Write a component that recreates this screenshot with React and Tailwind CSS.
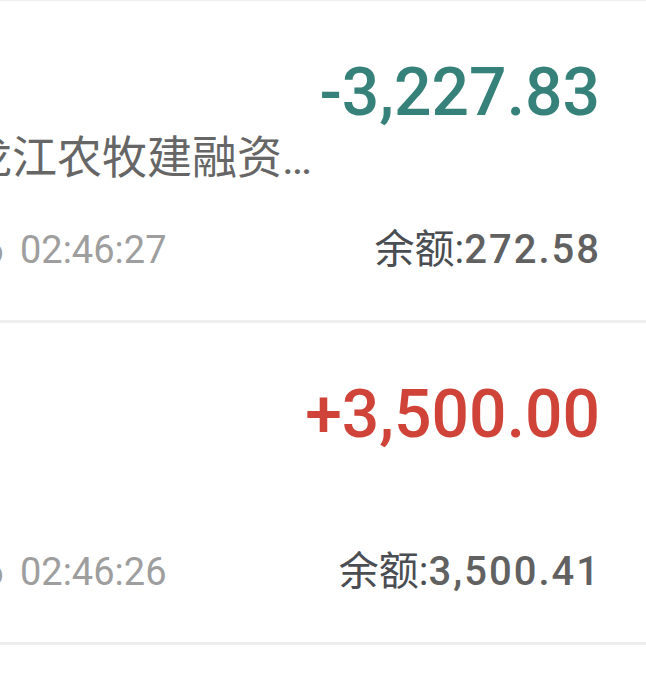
import React from 'react';

const rows = [
  {
    amount: '-3,227.83',
    positive: false,
    desc: '黑龙江农牧建融资产管理有限公司',
    date: '03-16',
    time: '02:46:27',
    balance: '272.58',
  },
  {
    amount: '+3,500.00',
    positive: true,
    desc: '',
    date: '03-16',
    time: '02:46:26',
    balance: '3,500.41',
  },
];

const font = { fontFamily: 'Roboto, "Noto Sans CJK SC", sans-serif' };

const TxRow = ({ tx }) => (
  <div className="h-[322px] border-b-[3px] border-[#eeeeee] overflow-hidden">
    <div className="-ml-[78px] mr-[48px] pt-[59px] flex flex-col">
      <div
        className={`self-end -mr-[2px] text-[66px] font-medium leading-none ${
          tx.positive ? 'text-[#cf4338]' : 'text-[#36827a]'
        }`}
      >
        {tx.amount}
      </div>
      <div className="mt-[5px] h-[56px] w-[405px] truncate text-[45px] leading-[56px] text-[#666666]">
        {tx.desc}
      </div>
      <div className="mt-[43px] flex items-baseline justify-between">
        <span className="flex items-baseline gap-[16px] text-[38px] leading-none text-[#9e9e9e]">
          <span className="-ml-[14px]">{tx.date}</span>
          <span>{tx.time}</span>
        </span>
        <span className="-mr-[3px] text-[40px] leading-none text-[#4a4d52]">
          余额:
          <span className="font-medium tracking-[2px] text-[#616161]">{tx.balance}</span>
        </span>
      </div>
    </div>
  </div>
);

export default function App() {
  return (
    <div className="w-[646px] h-[678px] overflow-hidden bg-white" style={font}>
      <div className="border-t border-[#eeeeee]">
        {rows.map((tx) => (
          <TxRow key={tx.time} tx={tx} />
        ))}
      </div>
    </div>
  );
}
